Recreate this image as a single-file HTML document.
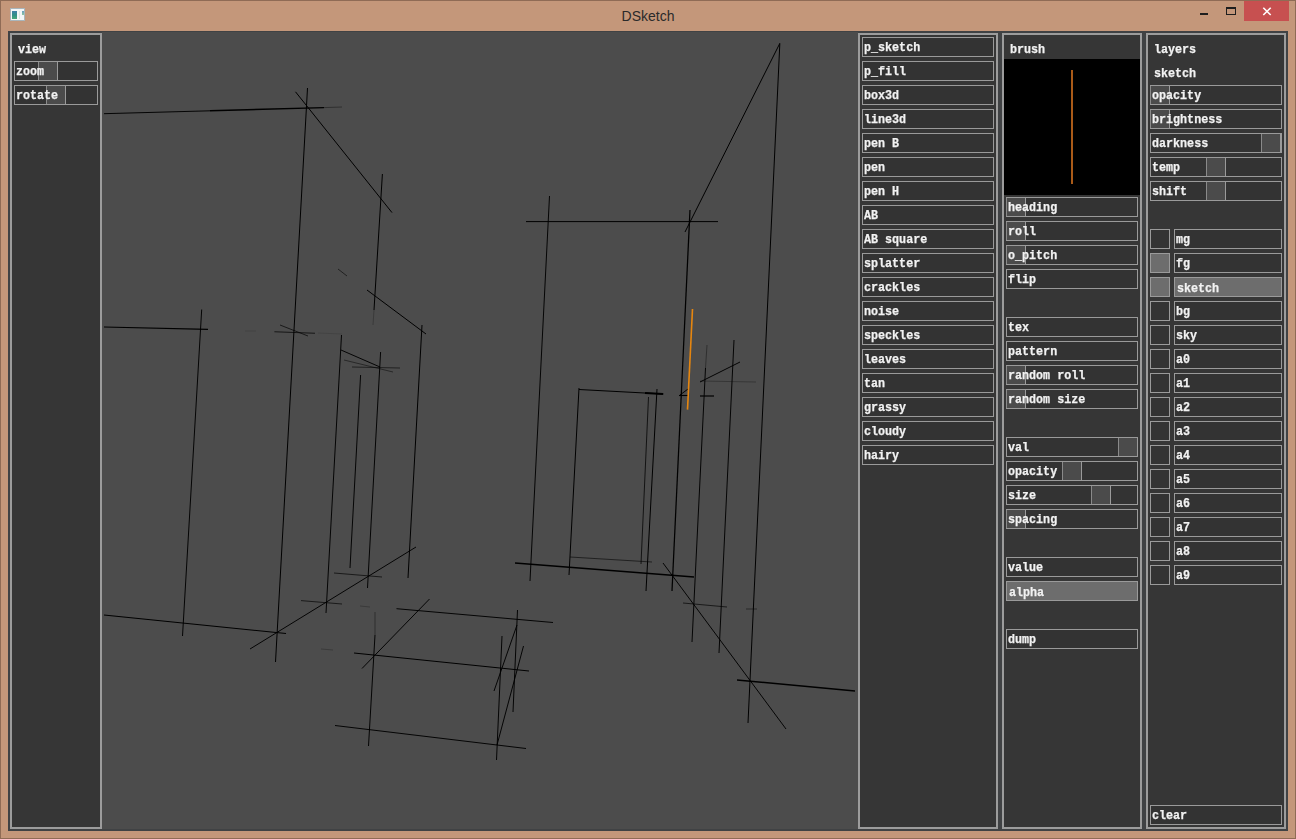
<!DOCTYPE html><html><head><meta charset="utf-8"><title>DSketch</title><style>
*{margin:0;padding:0;box-sizing:content-box}
html,body{width:1296px;height:839px;overflow:hidden;background:#c4977a}
body{position:relative;font-family:"Liberation Mono",monospace;}
.frame{position:absolute;left:0;top:0;width:1294px;height:837px;border:1px solid #8f6b55}
.client{position:absolute;left:8px;top:31px;width:1280px;height:800px;background:#404244}
.p{position:absolute;border:2px solid #9c9c9c;background:#363636}
.b{position:absolute;border:1px solid #9a9a9a;overflow:visible}
.k{position:absolute;top:0;width:18px;height:18px;background:#4b4b4b;border-left:1px solid #8a8a8a;border-right:1px solid #9a9a9a}
.t,.h{position:absolute;font-weight:bold;font-size:13px;line-height:18px;color:#f2f2f2;white-space:pre;transform:scaleX(0.9);transform-origin:0 0;filter:grayscale(1);-webkit-text-stroke:0.25px #f2f2f2}
.h{line-height:20px}
.title{position:absolute;left:0;width:1296px;top:7px;text-align:center;font-family:"Liberation Sans",sans-serif;font-size:14px;color:#2a2a2a;line-height:18px}
</style></head><body>
<div class="frame"></div>
<div class="title">DSketch</div>
<div style="position:absolute;left:10px;top:8px;width:13px;height:11px;border:1px solid #a9b6bc;background:#f3f6f7"></div>
<div style="position:absolute;left:12px;top:11px;width:5px;height:8px;background:linear-gradient(180deg,#3f7fa8,#2f8f88 50%,#48a878)"></div>
<div style="position:absolute;left:22px;top:11px;width:2px;height:4px;background:linear-gradient(180deg,#6a9cc0,#8cc8a0)"></div>
<div style="position:absolute;left:19px;top:11px;width:1px;height:8px;background:#dde6e2"></div>
<div style="position:absolute;left:1244px;top:1px;width:45px;height:20px;background:#c75050"></div>
<svg style="position:absolute;left:1244px;top:1px" width="45" height="20"><path d="M19.3 6.8 L26.7 14 M26.7 6.8 L19.3 14" stroke="#fff" stroke-width="1.6"/></svg>
<div style="position:absolute;left:1200px;top:13px;width:8px;height:2px;background:#1e1e1e"></div>
<div style="position:absolute;left:1226px;top:7px;width:8px;height:5px;border:1px solid #1e1e1e;border-top-width:2px"></div>
<div class="client"></div>
<div style="position:absolute;left:102px;top:32px;width:756px;height:797px;background:#4c4c4c"></div>
<div class="p" style="left:10px;top:33px;width:88px;height:792px"></div>
<div class="p" style="left:858px;top:33px;width:136px;height:792px"></div>
<div class="p" style="left:1002px;top:33px;width:136px;height:792px"></div>
<div class="p" style="left:1146px;top:33px;width:136px;height:792px"></div>
<span class="h" style="left:18px;top:40px">view</span>
<div class="b" style="left:14px;top:61px;width:82px;height:18px;background:#333333"><div class="k" style="left:23px"></div><span class="t" style="left:1px;top:1px">zoom</span></div>
<div class="b" style="left:14px;top:85px;width:82px;height:18px;background:#333333"><div class="k" style="left:31px"></div><span class="t" style="left:1px;top:1px">rotate</span></div>
<div class="b" style="left:862px;top:37px;width:130px;height:18px;background:#333333"><span class="t" style="left:1px;top:1px">p_sketch</span></div>
<div class="b" style="left:862px;top:61px;width:130px;height:18px;background:#333333"><span class="t" style="left:1px;top:1px">p_fill</span></div>
<div class="b" style="left:862px;top:85px;width:130px;height:18px;background:#333333"><span class="t" style="left:1px;top:1px">box3d</span></div>
<div class="b" style="left:862px;top:109px;width:130px;height:18px;background:#333333"><span class="t" style="left:1px;top:1px">line3d</span></div>
<div class="b" style="left:862px;top:133px;width:130px;height:18px;background:#333333"><span class="t" style="left:1px;top:1px">pen B</span></div>
<div class="b" style="left:862px;top:157px;width:130px;height:18px;background:#333333"><span class="t" style="left:1px;top:1px">pen</span></div>
<div class="b" style="left:862px;top:181px;width:130px;height:18px;background:#333333"><span class="t" style="left:1px;top:1px">pen H</span></div>
<div class="b" style="left:862px;top:205px;width:130px;height:18px;background:#333333"><span class="t" style="left:1px;top:1px">AB</span></div>
<div class="b" style="left:862px;top:229px;width:130px;height:18px;background:#333333"><span class="t" style="left:1px;top:1px">AB square</span></div>
<div class="b" style="left:862px;top:253px;width:130px;height:18px;background:#333333"><span class="t" style="left:1px;top:1px">splatter</span></div>
<div class="b" style="left:862px;top:277px;width:130px;height:18px;background:#333333"><span class="t" style="left:1px;top:1px">crackles</span></div>
<div class="b" style="left:862px;top:301px;width:130px;height:18px;background:#333333"><span class="t" style="left:1px;top:1px">noise</span></div>
<div class="b" style="left:862px;top:325px;width:130px;height:18px;background:#333333"><span class="t" style="left:1px;top:1px">speckles</span></div>
<div class="b" style="left:862px;top:349px;width:130px;height:18px;background:#333333"><span class="t" style="left:1px;top:1px">leaves</span></div>
<div class="b" style="left:862px;top:373px;width:130px;height:18px;background:#333333"><span class="t" style="left:1px;top:1px">tan</span></div>
<div class="b" style="left:862px;top:397px;width:130px;height:18px;background:#333333"><span class="t" style="left:1px;top:1px">grassy</span></div>
<div class="b" style="left:862px;top:421px;width:130px;height:18px;background:#333333"><span class="t" style="left:1px;top:1px">cloudy</span></div>
<div class="b" style="left:862px;top:445px;width:130px;height:18px;background:#333333"><span class="t" style="left:1px;top:1px">hairy</span></div>
<span class="h" style="left:1010px;top:40px">brush</span>
<div style="position:absolute;left:1004px;top:59px;width:136px;height:136px;background:#000"></div>
<div style="position:absolute;left:1071px;top:70px;width:2px;height:114px;background:#a95a18"></div>
<div class="b" style="left:1006px;top:197px;width:130px;height:18px;background:#333333"><div class="k" style="left:-1px"></div><span class="t" style="left:1px;top:1px">heading</span></div>
<div class="b" style="left:1006px;top:221px;width:130px;height:18px;background:#333333"><div class="k" style="left:-1px"></div><span class="t" style="left:1px;top:1px">roll</span></div>
<div class="b" style="left:1006px;top:245px;width:130px;height:18px;background:#333333"><div class="k" style="left:-1px"></div><span class="t" style="left:1px;top:1px">o_pitch</span></div>
<div class="b" style="left:1006px;top:269px;width:130px;height:18px;background:#333333"><span class="t" style="left:1px;top:1px">flip</span></div>
<div class="b" style="left:1006px;top:317px;width:130px;height:18px;background:#333333"><span class="t" style="left:1px;top:1px">tex</span></div>
<div class="b" style="left:1006px;top:341px;width:130px;height:18px;background:#333333"><span class="t" style="left:1px;top:1px">pattern</span></div>
<div class="b" style="left:1006px;top:365px;width:130px;height:18px;background:#333333"><div class="k" style="left:-1px"></div><span class="t" style="left:1px;top:1px">random roll</span></div>
<div class="b" style="left:1006px;top:389px;width:130px;height:18px;background:#333333"><div class="k" style="left:-1px"></div><span class="t" style="left:1px;top:1px">random size</span></div>
<div class="b" style="left:1006px;top:437px;width:130px;height:18px;background:#333333"><div class="k" style="left:111px"></div><span class="t" style="left:1px;top:1px">val</span></div>
<div class="b" style="left:1006px;top:461px;width:130px;height:18px;background:#333333"><div class="k" style="left:55px"></div><span class="t" style="left:1px;top:1px">opacity</span></div>
<div class="b" style="left:1006px;top:485px;width:130px;height:18px;background:#333333"><div class="k" style="left:84px"></div><span class="t" style="left:1px;top:1px">size</span></div>
<div class="b" style="left:1006px;top:509px;width:130px;height:18px;background:#333333"><div class="k" style="left:-1px"></div><span class="t" style="left:1px;top:1px">spacing</span></div>
<div class="b" style="left:1006px;top:557px;width:130px;height:18px;background:#333333"><span class="t" style="left:1px;top:1px">value</span></div>
<div class="b" style="left:1006px;top:581px;width:130px;height:18px;background:#6d6d6d"><span class="t" style="left:2px;top:2px">alpha</span></div>
<div class="b" style="left:1006px;top:629px;width:130px;height:18px;background:#333333"><span class="t" style="left:1px;top:1px">dump</span></div>
<span class="h" style="left:1154px;top:40px">layers</span>
<span class="h" style="left:1154px;top:64px">sketch</span>
<div class="b" style="left:1150px;top:85px;width:130px;height:18px;background:#333333"><div class="k" style="left:-1px"></div><span class="t" style="left:1px;top:1px">opacity</span></div>
<div class="b" style="left:1150px;top:109px;width:130px;height:18px;background:#333333"><div class="k" style="left:-1px"></div><span class="t" style="left:1px;top:1px">brightness</span></div>
<div class="b" style="left:1150px;top:133px;width:130px;height:18px;background:#333333"><div class="k" style="left:110px"></div><span class="t" style="left:1px;top:1px">darkness</span></div>
<div class="b" style="left:1150px;top:157px;width:130px;height:18px;background:#333333"><div class="k" style="left:55px"></div><span class="t" style="left:1px;top:1px">temp</span></div>
<div class="b" style="left:1150px;top:181px;width:130px;height:18px;background:#333333"><div class="k" style="left:55px"></div><span class="t" style="left:1px;top:1px">shift</span></div>
<div class="b" style="left:1150px;top:229px;width:18px;height:18px;background:#333333"></div>
<div class="b" style="left:1174px;top:229px;width:106px;height:18px;background:#333333"><span class="t" style="left:1px;top:1px">mg</span></div>
<div class="b" style="left:1150px;top:253px;width:18px;height:18px;background:#6d6d6d"></div>
<div class="b" style="left:1174px;top:253px;width:106px;height:18px;background:#333333"><span class="t" style="left:1px;top:1px">fg</span></div>
<div class="b" style="left:1150px;top:277px;width:18px;height:18px;background:#6d6d6d"></div>
<div class="b" style="left:1174px;top:277px;width:106px;height:18px;background:#6d6d6d"><span class="t" style="left:2px;top:2px">sketch</span></div>
<div class="b" style="left:1150px;top:301px;width:18px;height:18px;background:#333333"></div>
<div class="b" style="left:1174px;top:301px;width:106px;height:18px;background:#333333"><span class="t" style="left:1px;top:1px">bg</span></div>
<div class="b" style="left:1150px;top:325px;width:18px;height:18px;background:#333333"></div>
<div class="b" style="left:1174px;top:325px;width:106px;height:18px;background:#333333"><span class="t" style="left:1px;top:1px">sky</span></div>
<div class="b" style="left:1150px;top:349px;width:18px;height:18px;background:#333333"></div>
<div class="b" style="left:1174px;top:349px;width:106px;height:18px;background:#333333"><span class="t" style="left:1px;top:1px">a0</span></div>
<div class="b" style="left:1150px;top:373px;width:18px;height:18px;background:#333333"></div>
<div class="b" style="left:1174px;top:373px;width:106px;height:18px;background:#333333"><span class="t" style="left:1px;top:1px">a1</span></div>
<div class="b" style="left:1150px;top:397px;width:18px;height:18px;background:#333333"></div>
<div class="b" style="left:1174px;top:397px;width:106px;height:18px;background:#333333"><span class="t" style="left:1px;top:1px">a2</span></div>
<div class="b" style="left:1150px;top:421px;width:18px;height:18px;background:#333333"></div>
<div class="b" style="left:1174px;top:421px;width:106px;height:18px;background:#333333"><span class="t" style="left:1px;top:1px">a3</span></div>
<div class="b" style="left:1150px;top:445px;width:18px;height:18px;background:#333333"></div>
<div class="b" style="left:1174px;top:445px;width:106px;height:18px;background:#333333"><span class="t" style="left:1px;top:1px">a4</span></div>
<div class="b" style="left:1150px;top:469px;width:18px;height:18px;background:#333333"></div>
<div class="b" style="left:1174px;top:469px;width:106px;height:18px;background:#333333"><span class="t" style="left:1px;top:1px">a5</span></div>
<div class="b" style="left:1150px;top:493px;width:18px;height:18px;background:#333333"></div>
<div class="b" style="left:1174px;top:493px;width:106px;height:18px;background:#333333"><span class="t" style="left:1px;top:1px">a6</span></div>
<div class="b" style="left:1150px;top:517px;width:18px;height:18px;background:#333333"></div>
<div class="b" style="left:1174px;top:517px;width:106px;height:18px;background:#333333"><span class="t" style="left:1px;top:1px">a7</span></div>
<div class="b" style="left:1150px;top:541px;width:18px;height:18px;background:#333333"></div>
<div class="b" style="left:1174px;top:541px;width:106px;height:18px;background:#333333"><span class="t" style="left:1px;top:1px">a8</span></div>
<div class="b" style="left:1150px;top:565px;width:18px;height:18px;background:#333333"></div>
<div class="b" style="left:1174px;top:565px;width:106px;height:18px;background:#333333"><span class="t" style="left:1px;top:1px">a9</span></div>
<div class="b" style="left:1150px;top:805px;width:130px;height:18px;background:#333333"><span class="t" style="left:1px;top:1px">clear</span></div>
<svg style="position:absolute;left:102px;top:32px" width="756" height="797" viewBox="102 32 756 797"><line x1="104" y1="113.7" x2="210" y2="110.8" stroke="#000" stroke-width="0.95" stroke-opacity="1"/><line x1="210" y1="110.8" x2="324" y2="107.6" stroke="#000" stroke-width="1.45" stroke-opacity="1"/><line x1="324" y1="107.6" x2="342" y2="107" stroke="#000" stroke-width="0.95" stroke-opacity="0.4"/><line x1="295.5" y1="91.8" x2="392" y2="212.6" stroke="#000" stroke-width="1.00" stroke-opacity="1"/><line x1="307.5" y1="88" x2="275.5" y2="662" stroke="#000" stroke-width="1.00" stroke-opacity="1"/><line x1="382.4" y1="174" x2="374" y2="310" stroke="#000" stroke-width="1.00" stroke-opacity="1"/><line x1="374" y1="310" x2="373" y2="325" stroke="#000" stroke-width="0.95" stroke-opacity="0.25"/><line x1="338" y1="269" x2="347" y2="276" stroke="#000" stroke-width="0.95" stroke-opacity="0.6"/><line x1="367" y1="290" x2="426" y2="334" stroke="#000" stroke-width="1.00" stroke-opacity="1"/><line x1="526" y1="221.6" x2="718" y2="221.6" stroke="#000" stroke-width="1.00" stroke-opacity="1"/><line x1="549.5" y1="196" x2="530" y2="581" stroke="#000" stroke-width="0.95" stroke-opacity="1"/><line x1="780" y1="43" x2="685" y2="232" stroke="#000" stroke-width="1.00" stroke-opacity="1"/><line x1="779.8" y1="44" x2="748" y2="723" stroke="#000" stroke-width="1.00" stroke-opacity="1"/><line x1="690" y1="210" x2="672" y2="591" stroke="#000" stroke-width="1.25" stroke-opacity="1"/><line x1="104" y1="327" x2="208" y2="329.4" stroke="#000" stroke-width="1.10" stroke-opacity="1"/><line x1="245" y1="331" x2="256" y2="331" stroke="#000" stroke-width="0.95" stroke-opacity="0.12"/><line x1="274.4" y1="331.7" x2="315" y2="333.3" stroke="#000" stroke-width="1.15" stroke-opacity="0.7"/><line x1="318" y1="333" x2="342" y2="334" stroke="#000" stroke-width="0.95" stroke-opacity="0.12"/><line x1="280" y1="325" x2="308" y2="336" stroke="#000" stroke-width="0.95" stroke-opacity="0.7"/><line x1="201.7" y1="309.5" x2="182.5" y2="636" stroke="#000" stroke-width="0.95" stroke-opacity="1"/><line x1="341.5" y1="335" x2="326" y2="613" stroke="#000" stroke-width="0.95" stroke-opacity="1"/><line x1="341" y1="350" x2="380" y2="367" stroke="#000" stroke-width="0.95" stroke-opacity="1"/><line x1="344" y1="360" x2="393" y2="372" stroke="#000" stroke-width="0.95" stroke-opacity="0.5"/><line x1="352" y1="367" x2="400" y2="368" stroke="#000" stroke-width="0.95" stroke-opacity="0.6"/><line x1="422" y1="325" x2="408" y2="578" stroke="#000" stroke-width="1.00" stroke-opacity="1"/><line x1="380.6" y1="352" x2="367.5" y2="588" stroke="#000" stroke-width="0.95" stroke-opacity="1"/><line x1="360.6" y1="375" x2="350" y2="568" stroke="#000" stroke-width="0.95" stroke-opacity="1"/><line x1="250" y1="649" x2="416" y2="547" stroke="#000" stroke-width="0.95" stroke-opacity="1"/><line x1="334" y1="573" x2="382" y2="577" stroke="#000" stroke-width="0.95" stroke-opacity="0.7"/><line x1="301" y1="600.6" x2="342" y2="604" stroke="#000" stroke-width="0.95" stroke-opacity="0.7"/><line x1="321" y1="649" x2="333" y2="650" stroke="#000" stroke-width="0.95" stroke-opacity="0.25"/><line x1="104" y1="615" x2="286" y2="633.5" stroke="#000" stroke-width="1.10" stroke-opacity="1"/><line x1="579" y1="388" x2="569" y2="575" stroke="#000" stroke-width="1.00" stroke-opacity="1"/><line x1="579" y1="389.5" x2="663.5" y2="394" stroke="#000" stroke-width="1.10" stroke-opacity="1"/><line x1="645" y1="393" x2="663" y2="394" stroke="#000" stroke-width="1.90" stroke-opacity="1"/><line x1="657" y1="389" x2="646" y2="591" stroke="#000" stroke-width="1.00" stroke-opacity="1"/><line x1="648.5" y1="397" x2="641" y2="564" stroke="#000" stroke-width="0.95" stroke-opacity="0.8"/><line x1="570" y1="557" x2="652" y2="562" stroke="#000" stroke-width="0.95" stroke-opacity="0.6"/><line x1="515" y1="563" x2="694" y2="577" stroke="#000" stroke-width="1.40" stroke-opacity="1"/><line x1="680" y1="395" x2="688" y2="389" stroke="#000" stroke-width="0.95" stroke-opacity="1"/><line x1="679" y1="395.5" x2="688" y2="395.5" stroke="#000" stroke-width="1.10" stroke-opacity="1"/><line x1="707" y1="345" x2="705.5" y2="368" stroke="#000" stroke-width="0.95" stroke-opacity="0.4"/><line x1="705.5" y1="368" x2="692" y2="642" stroke="#000" stroke-width="0.95" stroke-opacity="1"/><line x1="700" y1="396" x2="714" y2="396" stroke="#000" stroke-width="1.20" stroke-opacity="1"/><line x1="700" y1="382" x2="740" y2="362" stroke="#000" stroke-width="0.95" stroke-opacity="1"/><line x1="700" y1="381" x2="756" y2="382" stroke="#000" stroke-width="0.95" stroke-opacity="0.3"/><line x1="734" y1="340" x2="719" y2="653" stroke="#000" stroke-width="0.95" stroke-opacity="1"/><line x1="663" y1="563" x2="786" y2="729" stroke="#000" stroke-width="0.95" stroke-opacity="1"/><line x1="683" y1="603" x2="727" y2="607" stroke="#000" stroke-width="0.95" stroke-opacity="0.7"/><line x1="746" y1="609" x2="757" y2="609" stroke="#000" stroke-width="0.95" stroke-opacity="0.5"/><line x1="737" y1="680" x2="855" y2="691" stroke="#000" stroke-width="1.50" stroke-opacity="1"/><line x1="396.5" y1="608.7" x2="553" y2="622.5" stroke="#000" stroke-width="0.95" stroke-opacity="1"/><line x1="362" y1="668.5" x2="429.5" y2="599" stroke="#000" stroke-width="0.95" stroke-opacity="1"/><line x1="354" y1="653" x2="529" y2="671" stroke="#000" stroke-width="1.00" stroke-opacity="1"/><line x1="375" y1="612" x2="375" y2="635" stroke="#000" stroke-width="0.95" stroke-opacity="0.4"/><line x1="375" y1="635" x2="368.5" y2="746" stroke="#000" stroke-width="0.95" stroke-opacity="1"/><line x1="335" y1="725.5" x2="526" y2="748.5" stroke="#000" stroke-width="0.95" stroke-opacity="1"/><line x1="502" y1="636" x2="496.5" y2="760" stroke="#000" stroke-width="0.95" stroke-opacity="1"/><line x1="517.5" y1="610" x2="513" y2="712" stroke="#000" stroke-width="0.95" stroke-opacity="1"/><line x1="523.5" y1="646" x2="497" y2="745" stroke="#000" stroke-width="0.95" stroke-opacity="1"/><line x1="517" y1="625" x2="494" y2="691" stroke="#000" stroke-width="0.95" stroke-opacity="1"/><line x1="360" y1="606" x2="370" y2="607" stroke="#000" stroke-width="0.95" stroke-opacity="0.25"/><line x1="692.5" y1="309" x2="687.5" y2="409.6" stroke="#e6860f" stroke-width="1.6"/></svg>
</body></html>
